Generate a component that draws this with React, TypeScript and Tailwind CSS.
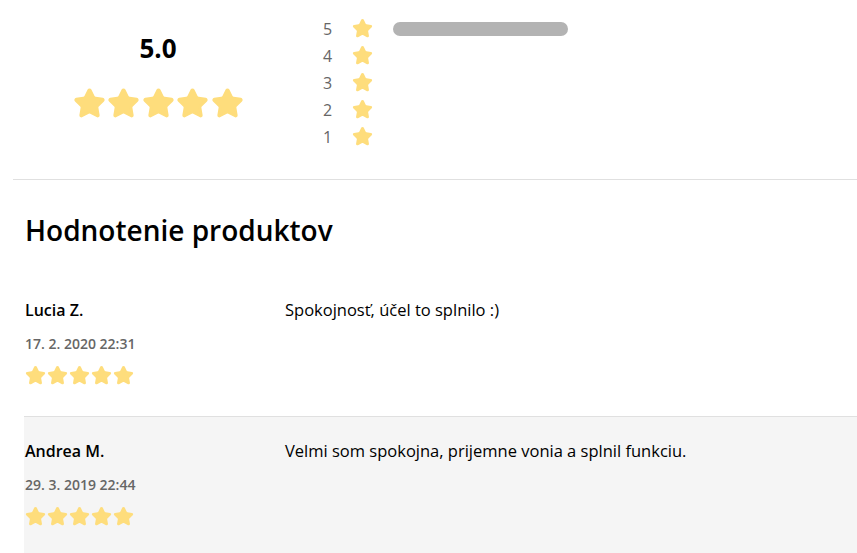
import { Star } from 'lucide-react';

const STAR = '#fedd7c';

const reviews = [
  { name: 'Lucia Z.', date: '17. 2. 2020 22:31', text: 'Spokojnosť, účel to splnilo :)', shaded: false },
  { name: 'Andrea M.', date: '29. 3. 2019 22:44', text: 'Velmi som spokojna, prijemne vonia a splnil funkciu.', shaded: true },
];

function Stars({ size, gap }: { size: number; gap: string }) {
  return (
    <div className={`flex ${gap}`}>
      {[0, 1, 2, 3, 4].map((i) => (
        <Star key={i} size={size} fill={STAR} color={STAR} strokeWidth={2} />
      ))}
    </div>
  );
}

export default function App() {
  return (
    <div className="w-[857px] h-[553px] overflow-hidden bg-white font-['Open_Sans',sans-serif] text-black">
      {/* summary */}
      <div className="ml-[13px] flex pt-[15px] pb-[29px] border-b border-[#e0e0e0]">
        <div className="w-[290px] flex flex-col items-center pt-[17px]">
          <div className="text-[26px] font-bold leading-[32px]">5.0</div>
          <div className="mt-[23px]">
            <Stars size={33} gap="gap-[1.5px]" />
          </div>
        </div>
        <div className="flex flex-col pl-[20px]">
          {[5, 4, 3, 2, 1].map((n) => (
            <div key={n} className="flex items-center h-[27px]">
              <span className="w-[29px] text-[16px] text-[#666]">{n}</span>
              <Star size={21} fill={STAR} color={STAR} strokeWidth={2} />
              {n === 5 && <div className="ml-[20px] w-[175px] h-[14px] rounded-full bg-[#b3b3b3]" />}
            </div>
          ))}
        </div>
      </div>

      <h2 className="pl-[25px] mt-[32px] mb-[28px] text-[28px] leading-[36px] font-semibold">Hodnotenie produktov</h2>

      <div className="ml-[24px]">
        {reviews.map((r, i) => (
          <div
            key={i}
            className={`flex pl-[1px] h-[140px] pt-[22px] ${i > 0 ? 'border-t border-[#e0e0e0]' : ''} ${r.shaded ? 'bg-[#f5f5f5]' : ''}`}
          >
            <div className="w-[260px]">
              <div className="text-[16px] leading-[24px] font-semibold">{r.name}</div>
              <div className="mt-[12px] text-[14px] leading-[20px] font-semibold text-[#666]">{r.date}</div>
              <div className="mt-[11px]">
                <Stars size={21} gap="gap-[1px]" />
              </div>
            </div>
            <div className="text-[16.5px] leading-[24px]">{r.text}</div>
          </div>
        ))}
      </div>
    </div>
  );
}
